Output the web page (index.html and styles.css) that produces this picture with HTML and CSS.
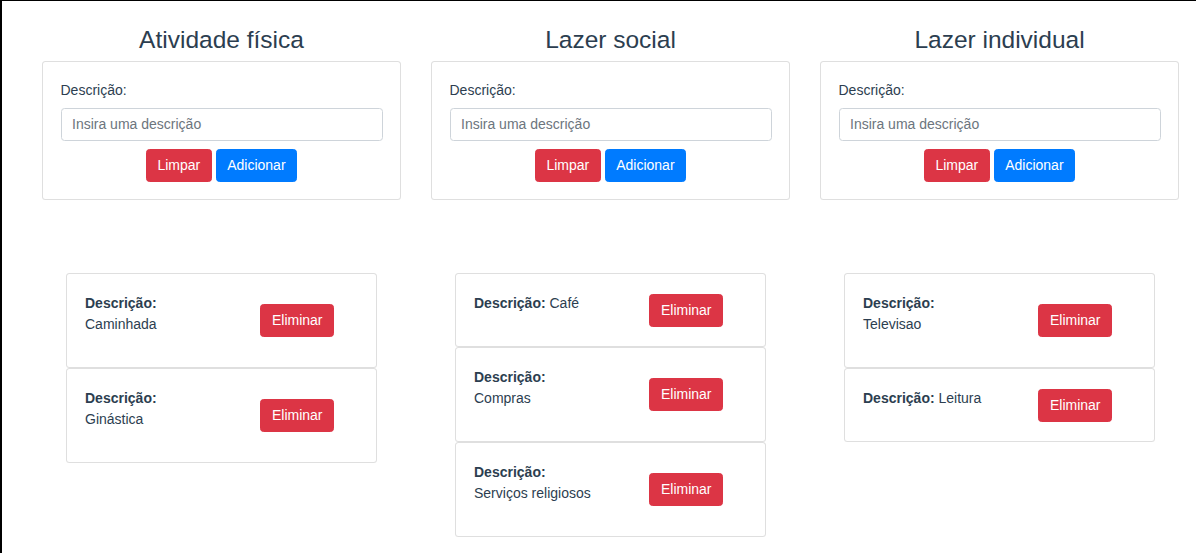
FILE: index.html
```html
<!DOCTYPE html>
<html lang="pt">
<head>
<meta charset="utf-8">
<title>Atividades</title>
<link rel="stylesheet" href="styles.css">
</head>
<body>
<div class="app">
  <div class="column">
    <h3 class="title">Atividade física</h3>
    <div class="card form-card">
      <label class="label">Descrição:</label>
      <input class="input" type="text" placeholder="Insira uma descrição">
      <div class="actions">
        <button class="btn btn-danger">Limpar</button>
        <button class="btn btn-primary">Adicionar</button>
      </div>
    </div>
    <div class="list">
      <div class="card item">
        <div class="item-text"><p><b>Descrição:</b> Caminhada</p></div>
        <div class="item-action"><button class="btn btn-danger">Eliminar</button></div>
      </div>
      <div class="card item">
        <div class="item-text"><p><b>Descrição:</b> Ginástica</p></div>
        <div class="item-action"><button class="btn btn-danger">Eliminar</button></div>
      </div>
    </div>
  </div>
  <div class="column">
    <h3 class="title">Lazer social</h3>
    <div class="card form-card">
      <label class="label">Descrição:</label>
      <input class="input" type="text" placeholder="Insira uma descrição">
      <div class="actions">
        <button class="btn btn-danger">Limpar</button>
        <button class="btn btn-primary">Adicionar</button>
      </div>
    </div>
    <div class="list">
      <div class="card item">
        <div class="item-text"><p><b>Descrição:</b> Café</p></div>
        <div class="item-action"><button class="btn btn-danger">Eliminar</button></div>
      </div>
      <div class="card item">
        <div class="item-text"><p><b>Descrição:</b> Compras</p></div>
        <div class="item-action"><button class="btn btn-danger">Eliminar</button></div>
      </div>
      <div class="card item">
        <div class="item-text"><p><b>Descrição:</b> Serviços religiosos</p></div>
        <div class="item-action"><button class="btn btn-danger">Eliminar</button></div>
      </div>
    </div>
  </div>
  <div class="column">
    <h3 class="title">Lazer individual</h3>
    <div class="card form-card">
      <label class="label">Descrição:</label>
      <input class="input" type="text" placeholder="Insira uma descrição">
      <div class="actions">
        <button class="btn btn-danger">Limpar</button>
        <button class="btn btn-primary">Adicionar</button>
      </div>
    </div>
    <div class="list">
      <div class="card item">
        <div class="item-text"><p><b>Descrição:</b> Televisao</p></div>
        <div class="item-action"><button class="btn btn-danger">Eliminar</button></div>
      </div>
      <div class="card item">
        <div class="item-text"><p><b>Descrição:</b> Leitura</p></div>
        <div class="item-action"><button class="btn btn-danger">Eliminar</button></div>
      </div>
    </div>
  </div>
</div>
</body>
</html>
```

FILE: styles.css
```css
* { box-sizing: border-box; }

html, body { height: 100%; }

body {
  margin: 0;
  min-height: 100vh;
  border-top: 1px solid #000;
  border-left: 2px solid #000;
  background: #fff;
  font-family: "Liberation Sans", Arial, Helvetica, sans-serif;
  font-size: 14px;
  line-height: 1.5;
  color: #2c3e50;
}

.app {
  display: grid;
  grid-template-columns: repeat(3, 389px);
  padding: 24px 0 0 25px;
  align-items: start;
}

.column {
  padding: 0 15px;
  display: flex;
  flex-direction: column;
}

.title {
  margin: 0 0 7px;
  font-size: 24.5px;
  font-weight: 400;
  line-height: 1.2;
  text-align: center;
  color: #2c3e50;
}

.card {
  background: #fff;
  border: 1px solid rgba(0, 0, 0, 0.125);
  border-radius: 3.5px;
}

.form-card {
  display: flex;
  flex-direction: column;
  padding: 17.5px 17.5px 17px;
}

.label {
  display: block;
  margin-bottom: 7.5px;
}

.input {
  display: block;
  width: 100%;
  height: 33px;
  padding: 4px 10.5px 5px;
  font-family: inherit;
  font-size: 14px;
  line-height: 1.5;
  color: #495057;
  border: 1px solid #ced4da;
  border-radius: 3.5px;
  background: #fff;
}

.input::placeholder { color: #6c757d; opacity: 1; }

.actions {
  margin-top: 8px;
  display: flex;
  justify-content: center;
  gap: 4px;
}

.btn {
  display: inline-block;
  height: 33px;
  padding: 0 10.5px;
  font-family: inherit;
  font-size: 14px;
  line-height: 31px;
  color: #fff;
  border: 1px solid transparent;
  border-radius: 3.5px;
  cursor: pointer;
}

.btn-danger { background: #dc3545; border-color: #dc3545; }
.btn-primary { background: #007bff; border-color: #007bff; }

.list {
  margin-top: 73px;
  margin-left: 24px;
  width: 311px;
  display: flex;
  flex-direction: column;
}

.item {
  display: flex;
  align-items: center;
  padding: 18.5px 3px;
}

.item-text, .item-action {
  flex: 1 1 0;
  padding: 0 15px;
  min-width: 0;
}

.item-text p {
  margin: 0 0 14px;
}

.item-action {
  text-align: center;
}
```
